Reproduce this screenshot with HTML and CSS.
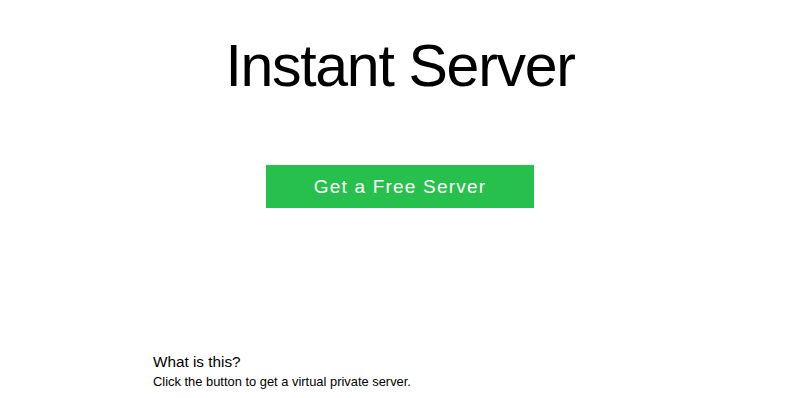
FILE: index.html
```html
<!DOCTYPE html>
<html>
<head>
<meta charset="utf-8">
<link rel="stylesheet" href="styles.css">
</head>
<body>
<main class="page">
  <h1 class="title">Instant Server</h1>
  <div class="cta">
    <button class="btn">Get a Free Server</button>
  </div>
  <section class="info">
    <h2 class="info-title">What is this?</h2>
    <p class="info-text">Click the button to get a virtual private server.</p>
  </section>
</main>
</body>
</html>
```
FILE: styles.css
```css
html, body {
  margin: 0;
  padding: 0;
  background: #ffffff;
}
body {
  font-family: "Liberation Sans", Arial, sans-serif;
  color: #000;
}
.page {
  display: flex;
  flex-direction: column;
  align-items: center;
}
.title {
  margin: 30px 0 0;
  font-size: 59px;
  font-weight: 400;
  line-height: 72px;
  letter-spacing: -1.3px;
}
.cta {
  margin-top: 63px;
}
.btn {
  display: block;
  width: 268px;
  height: 43px;
  border: none;
  background: #28c04c;
  color: #fff;
  font-family: "Liberation Sans", Arial, sans-serif;
  font-size: 19px;
  letter-spacing: 1.2px;
  padding: 0;
  cursor: pointer;
}
.info {
  align-self: stretch;
  padding-left: 153px;
  margin-top: 144px;
}
.info-title {
  margin: 0;
  font-size: 15.3px;
  font-weight: 400;
  line-height: 20px;
}
.info-text {
  margin: 2px 0 0;
  font-size: 12.9px;
  line-height: 16px;
}
```
